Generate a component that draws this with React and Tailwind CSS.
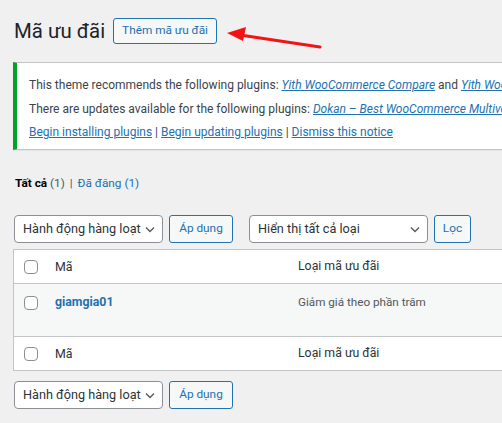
import React from 'react';

const font = { fontFamily: 'Roboto, "Liberation Sans", Arial, sans-serif' };

function Chevron() {
  return (
    <svg width="10" height="10" viewBox="0 0 10 10" className="shrink-0">
      <path d="M1 3.5 L5 7.5 L9 3.5" fill="none" stroke="#50575e" strokeWidth="1.3" />
    </svg>
  );
}

function Select({ label, width }) {
  return (
    <div className={`flex items-center justify-between h-[28px] ${width} pl-[8px] pr-[7px] bg-white border border-[#8c8f94] rounded-[4px] text-[12.7px] text-[#2c3338]`}>
      <span className="whitespace-nowrap">{label}</span>
      <Chevron />
    </div>
  );
}

function Button({ label, width }) {
  return (
    <button className={`h-[28px] ${width} border border-[#2271b1] rounded-[3px] bg-[#f6f7f7] text-[11.8px] text-[#2271b1] flex items-center justify-center`}>
      {label}
    </button>
  );
}

function Checkbox() {
  return <div className="w-[14px] h-[14px] border border-[#8c8f94] rounded-[4px] bg-white shrink-0" />;
}

function Row({ first, second, body }) {
  return (
    <div className={`flex ${body ? 'h-[53px] items-start pt-[9px] bg-[#f6f7f7] border-b border-[#c3c4c7]' : 'h-[33px] items-center'}`}>
      <div className={`w-[31px] pl-[10px] flex ${body ? 'pt-[3px]' : ''}`}>
        <Checkbox />
      </div>
      <div className={`w-[253px] pl-[10px] leading-[19px] ${body ? 'text-[12.3px] font-bold text-[#2271b1]' : 'text-[12.4px] text-[#2c3338]'}`}>{first}</div>
      <div className={`whitespace-nowrap leading-[19px] ${body ? 'text-[11.7px] text-[#50575e]' : 'text-[12.3px] text-[#2c3338]'}`}>{second}</div>
    </div>
  );
}

export default function App() {
  return (
    <div className="relative w-[502px] h-[423px] overflow-hidden bg-[#f0f0f1] text-[#3c434a]" style={font}>
      <div className="pl-[13px] pt-[18px]">
        <div className="flex items-center h-[26px]">
          <h1 className="text-[20.4px] text-[#1d2327] leading-none ml-[1px]">Mã ưu đãi</h1>
          <button className="ml-[8px] h-[26px] px-[8px] border border-[#2271b1] rounded-[3px] bg-[#f6f7f7] text-[11.8px] text-[#2271b1]">
            Thêm mã ưu đãi
          </button>
        </div>

        <div className="mt-[18px] w-[600px] bg-white border border-[#c3c4c7] border-l-4 border-l-[#00a32a] pl-[12px] pt-[13px] pb-[7px] flex flex-col gap-[4.5px] text-[12px] text-[#3c434a] whitespace-nowrap shadow-[0_1px_1px_rgba(0,0,0,0.04)]">
          <p className="leading-[19px]">
            This theme recommends the following plugins: <a className="italic underline text-[#2271b1]">Yith WooCommerce Compare</a> and <a className="italic underline text-[#2271b1]">Yith WooCommerce Wishlist</a>.
          </p>
          <p className="leading-[19px]">
            There are updates available for the following plugins: <a className="italic underline text-[#2271b1]">Dokan – Best WooCommerce Multivendor Marketplace Solution</a>.
          </p>
          <p className="leading-[19px]">
            <a className="underline text-[#2271b1]">Begin installing plugins</a> | <a className="underline text-[#2271b1]">Begin updating plugins</a> | <a className="underline text-[#2271b1]">Dismiss this notice</a>
          </p>
        </div>

        <div className="mt-[24px] ml-[2px] text-[11.8px] leading-[19px] text-[#50575e]">
          <span className="font-bold text-[#000]">Tất cả</span> (1) <span className="mx-[2px] text-[#50575e]">|</span> <span className="text-[#2271b1]">Đã đăng (1)</span>
        </div>

        <div className="mt-[22px] flex items-center ml-[1px]">
          <Select label="Hành động hàng loạt" width="w-[149px]" />
          <div className="ml-[6px]"><Button label="Áp dụng" width="w-[64px]" /></div>
          <div className="ml-[16px]"><Select label="Hiển thị tất cả loại" width="w-[179px]" /></div>
          <div className="ml-[6px]"><Button label="Lọc" width="w-[37px]" /></div>
        </div>

        <div className="mt-[6px] w-[600px] bg-white border border-[#c3c4c7]">
          <div className="border-b border-[#c3c4c7]">
            <Row first="Mã" second="Loại mã ưu đãi" />
          </div>
          <Row first="giamgia01" second="Giảm giá theo phần trăm" body />
          <Row first="Mã" second="Loại mã ưu đãi" />
        </div>

        <div className="mt-[10px] flex items-center ml-[1px]">
          <Select label="Hành động hàng loạt" width="w-[149px]" />
          <div className="ml-[6px]"><Button label="Áp dụng" width="w-[64px]" /></div>
        </div>
      </div>

      <svg className="absolute left-[222px] top-[24px]" width="104" height="30" viewBox="0 0 104 30">
        <line x1="98" y1="23" x2="18" y2="11" stroke="#f21414" strokeWidth="3" strokeLinecap="round" />
        <polygon points="5,9 24,3 21,17" fill="#f21414" />
      </svg>
    </div>
  );
}
